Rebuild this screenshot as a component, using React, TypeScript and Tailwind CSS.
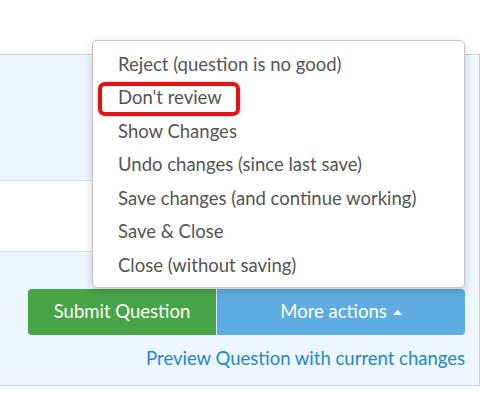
const menuItems = [
  "Reject (question is no good)",
  "Don't review",
  "Show Changes",
  "Undo changes (since last save)",
  "Save changes (and continue working)",
  "Save & Close",
  "Close (without saving)",
];

export default function App() {
  return (
    <div className="relative w-[500px] h-[396px] overflow-hidden bg-white font-['Lato','Liberation_Sans',sans-serif]">
      <div className="h-[54px]" />

      {/* Editor panel */}
      <div className="-ml-[2px] w-[482px] h-[332px] border border-[#c9cdd2] bg-[#eef6fd] pt-[125px]">
        <div className="w-[466px] h-[72px] bg-white border-y border-[#d6dee6]" />

        <div className="mt-[37px] ml-[29px] flex w-[437px] h-[46px]">
          <button className="w-[188px] h-full rounded-l-[4px] bg-[#47a447] text-white text-[18.5px]">
            Submit Question
          </button>
          <button className="flex-1 h-full rounded-r-[4px] bg-[#5dade2] text-white text-[18.5px] flex items-center justify-center gap-[6px] border-l border-[#d9e9f5]">
            More actions
            <svg width="9" height="5" viewBox="0 0 9 5">
              <path d="M0 5 L4.5 0 L9 5 Z" fill="white" />
            </svg>
          </button>
        </div>

        <div className="w-[466px] mt-[11px] text-right text-[18.5px] text-[#1e88d0] leading-[24px]">
          Preview Question with current changes
        </div>
      </div>

      {/* Dropdown menu */}
      <div className="absolute left-[92px] top-[40px] w-[373px] h-[248px] rounded-[5px] border border-[#c4c4c4] bg-white shadow-[0_3px_8px_rgba(0,0,0,0.18)] pt-[7px]">
        {menuItems.map((item, i) => (
          <div key={item} className="relative h-[33.5px] flex items-center pl-[25px] text-[18.5px] text-[#555]">
            {i === 1 && (
              <div className="absolute left-[5px] top-[0px] w-[142px] h-[34px] rounded-[7px] border-4 border-[#e01414] shadow-[0_0_3px_rgba(200,0,0,0.35)]" />
            )}
            <span className="relative">{item}</span>
          </div>
        ))}
      </div>
    </div>
  );
}
